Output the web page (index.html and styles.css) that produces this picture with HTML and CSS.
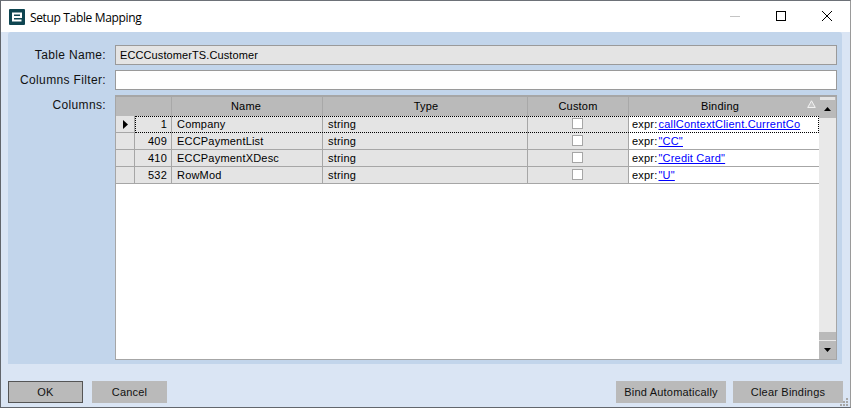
FILE: index.html
```html
<!DOCTYPE html>
<html lang="en">
<head>
<meta charset="utf-8">
<title>Setup Table Mapping</title>
<link rel="stylesheet" href="styles.css">
</head>
<body>
<div class="window">
  <header class="titlebar">
    <svg class="logo" width="16" height="16" viewBox="0 0 16 16"><rect width="16" height="16" rx="1" fill="#0e4551"/><path d="M4 8h8V4.500H4v7h8.500" fill="none" stroke="#fff" stroke-width="2"/></svg>
    <span class="title">Setup Table Mapping</span>
    <div class="controls">
      <svg class="ctl" width="46" height="32" viewBox="0 0 46 32"><path d="M18 15.500h10" stroke="#c4c4c4"/></svg>
      <svg class="ctl" width="46" height="32" viewBox="0 0 46 32"><rect x="18.500" y="10.500" width="9" height="9" fill="none" stroke="#000"/></svg>
      <svg class="ctl" width="46" height="32" viewBox="0 0 46 32"><path d="M18 10l10 10M28 10L18 20" stroke="#000" fill="none"/></svg>
    </div>
  </header>
  <main class="content">
    <section class="panel">
      <div class="field">
        <label class="label">Table Name:</label>
        <div class="input readonly">ECCCustomerTS.Customer</div>
      </div>
      <div class="field">
        <label class="label">Columns Filter:</label>
        <div class="input"></div>
      </div>
      <div class="field columns">
        <label class="label">Columns:</label>
        <div class="grid">
          <div class="table">
            <div class="row head">
              <div class="c gut"></div><div class="c idx"></div><div class="c name">Name</div><div class="c type">Type</div><div class="c cust">Custom</div>
              <div class="c bind">Binding<svg class="sort" width="9" height="8" viewBox="0 0 9 8"><path d="M4.500 .8L8.300 7.500H.7z" fill="#c8c8c8" stroke="#f2f2f2"/></svg></div>
            </div>
            <div class="row current">
              <div class="c gut"><svg width="7" height="9" viewBox="0 0 7 9"><path d="M1 0l5 4.500L1 9z" fill="#000"/></svg></div>
              <div class="cells">
                <div class="c idx">1</div><div class="c name">Company</div><div class="c type">string</div>
                <div class="c cust"><span class="check"></span></div>
                <div class="c bind">expr:<a class="link">callContextClient.CurrentCo</a></div>
              </div>
            </div>
            <div class="row">
              <div class="c gut"></div><div class="c idx">409</div><div class="c name">ECCPaymentList</div><div class="c type">string</div>
              <div class="c cust"><span class="check"></span></div>
              <div class="c bind">expr:<a class="link">"CC"</a></div>
            </div>
            <div class="row">
              <div class="c gut"></div><div class="c idx">410</div><div class="c name">ECCPaymentXDesc</div><div class="c type">string</div>
              <div class="c cust"><span class="check"></span></div>
              <div class="c bind">expr:<a class="link">"Credit Card"</a></div>
            </div>
            <div class="row">
              <div class="c gut"></div><div class="c idx">532</div><div class="c name">RowMod</div><div class="c type">string</div>
              <div class="c cust"><span class="check"></span></div>
              <div class="c bind">expr:<a class="link">"U"</a></div>
            </div>
          </div>
          <div class="scrollbar">
            <div class="sb-top"><div class="sb-grip"></div></div>
            <div class="sb-btn"><svg width="7" height="4" viewBox="0 0 7 4"><path d="M3.500 0L7 4H0z" fill="#000"/></svg></div>
            <div class="sb-track"></div>
            <div class="sb-thumb"></div>
            <div class="sb-btn low"><svg width="7" height="4" viewBox="0 0 7 4"><path d="M0 0h7L3.500 4z" fill="#000"/></svg></div>
          </div>
        </div>
      </div>
    </section>
    <footer class="actions">
      <button class="btn default">OK</button>
      <button class="btn cancel">Cancel</button>
      <button class="btn bindauto">Bind Automatically</button>
      <button class="btn clear">Clear Bindings</button>
    </footer>
    <svg class="resize" width="9" height="9" viewBox="0 0 9 9"><path d="M7 1h2v2H7zM4 4h2v2H4zM7 4h2v2H7zM1 7h2v2H1zM4 7h2v2H4zM7 7h2v2H7z" fill="#a6a6a6"/></svg>
  </main>
</div>
</body>
</html>
```
FILE: styles.css
```css
* { box-sizing: border-box; }
html, body { margin: 0; padding: 0; }
body { width: 851px; height: 408px; overflow: hidden; background: #fff; font-family: "Liberation Sans", Arial, sans-serif; font-size: 11px; color: #000; }
.window { width: 851px; height: 408px; display: flex; flex-direction: column; border-top: 1px solid #6d7178; border-left: 1px solid #62666c; border-bottom: 1px solid #62666c; border-right: 1px solid #9a9a9a; }
.titlebar { height: 31px; flex: none; display: flex; align-items: center; padding-left: 8px; background: #fff; }
.logo { flex: none; }
.title { margin-left: 5px; padding-top: 2px; font-family: "Open Sans", "Noto Sans", sans-serif; font-size: 12px; letter-spacing: -.35px; color: #000; }
.controls { margin-left: auto; display: flex; }
.ctl { display: block; }
.content { flex: 1; position: relative; background: #dae5f4; display: flex; flex-direction: column; padding-left: 7px; padding-right: 7px; min-height: 0; }
.panel { height: 332px; flex: none; margin-right: 1px; background: #c2d5eb; border-radius: 3px 3px 0 0; padding: 13px 5px 4px 0; display: flex; flex-direction: column; gap: 5px; }
.field { display: flex; }
.label { width: 98px; margin-right: 1px; flex: none; text-align: right; line-height: 20px; color: #111; font-size: 12px; letter-spacing: .35px; }
.input { margin-left: 8px; flex: 1; height: 20px; border: 1px solid #9a9a9a; background: #fff; line-height: 18px; padding-left: 4px; font-size: 11px; letter-spacing: .1px; }
.input.readonly { background: #e4e4e4; }
.columns { flex: 1; min-height: 0; }
.grid { margin-left: 8px; flex: 1; display: flex; background: #fff; border: 1px solid #a6a6a6; border-top-width: 2px; min-height: 0; }
.table { flex: 1; min-width: 0; }
.row { display: flex; height: 17px; border-bottom: 1px solid #a6a6a6; line-height: 16px; }
.row.head { height: 19px; line-height: 19px; background: #bababa; border-bottom: 0; }
.c { flex: none; padding: 0 3px; border-right: 1px solid #a6a6a6; background: #e4e4e4; white-space: nowrap; overflow: hidden; font-size: 11px; letter-spacing: .2px; }
.head .c { background: #bababa; text-align: center; position: relative; border-right-color: #a8a8a8; }
.head .gut { border-right-color: #bababa; }
.head .name { padding: 0 5px 0 3px; }
.head .bind { padding: 0 11px 0 3px; }
.gut { width: 19px; display: flex; align-items: center; padding-left: 6px; }
.idx { width: 37px; text-align: right; padding-right: 4px; }
.name { width: 151px; padding-left: 5px; }
.type { width: 205px; padding-left: 5px; }
.cust { width: 101px; display: flex; justify-content: center; align-items: flex-start; padding: 2px 4px 0 2px; }
.head .cust { display: block; padding: 0 3px; }
.bind { width: 190px; background: #fff; padding-left: 3px; border-right: 0; }
.check { display: block; width: 11px; height: 11px; background: #fff; border: 1px solid #a6a6a6; }
.link { color: #0000ff; text-decoration: underline; margin-left: 1px; }
.sort { position: absolute; right: 3px; top: 3px; }
.cells { display: flex; outline: 1px dotted #000; outline-offset: -1px; height: 17px; position: relative; margin-bottom: -1px; z-index: 0; }
.cells .c { position: relative; z-index: -1; }
.scrollbar { width: 17px; flex: none; background: #e9e9e9; display: flex; flex-direction: column; }
.sb-top { height: 3px; background: #bababa; padding: 0 1px; flex: none; }
.sb-grip { height: 3px; background: #e4e4e4; }
.sb-btn { height: 18px; background: #bababa; display: flex; align-items: center; justify-content: center; flex: none; }
.sb-btn.low { height: 18px; }
.sb-track { flex: 1; }
.sb-thumb { height: 9px; background: #bababa; border-bottom: 1px solid #e9e9e9; flex: none; }
.actions { flex: 1; display: flex; align-items: flex-start; padding-top: 17px; }
.btn { height: 22px; border: 0; background: #bababa; font-family: "Liberation Sans", Arial, sans-serif; font-size: 11px; letter-spacing: .2px; color: #111; padding: 0; }
.btn.default { width: 75px; border: 1px solid #555; }
.btn.cancel { width: 75px; margin-left: 9px; }
.btn.bindauto { width: 110px; margin-left: auto; }
.btn.clear { width: 110px; margin-left: 7px; }
.resize { position: absolute; right: 2px; bottom: 1px; }
```
